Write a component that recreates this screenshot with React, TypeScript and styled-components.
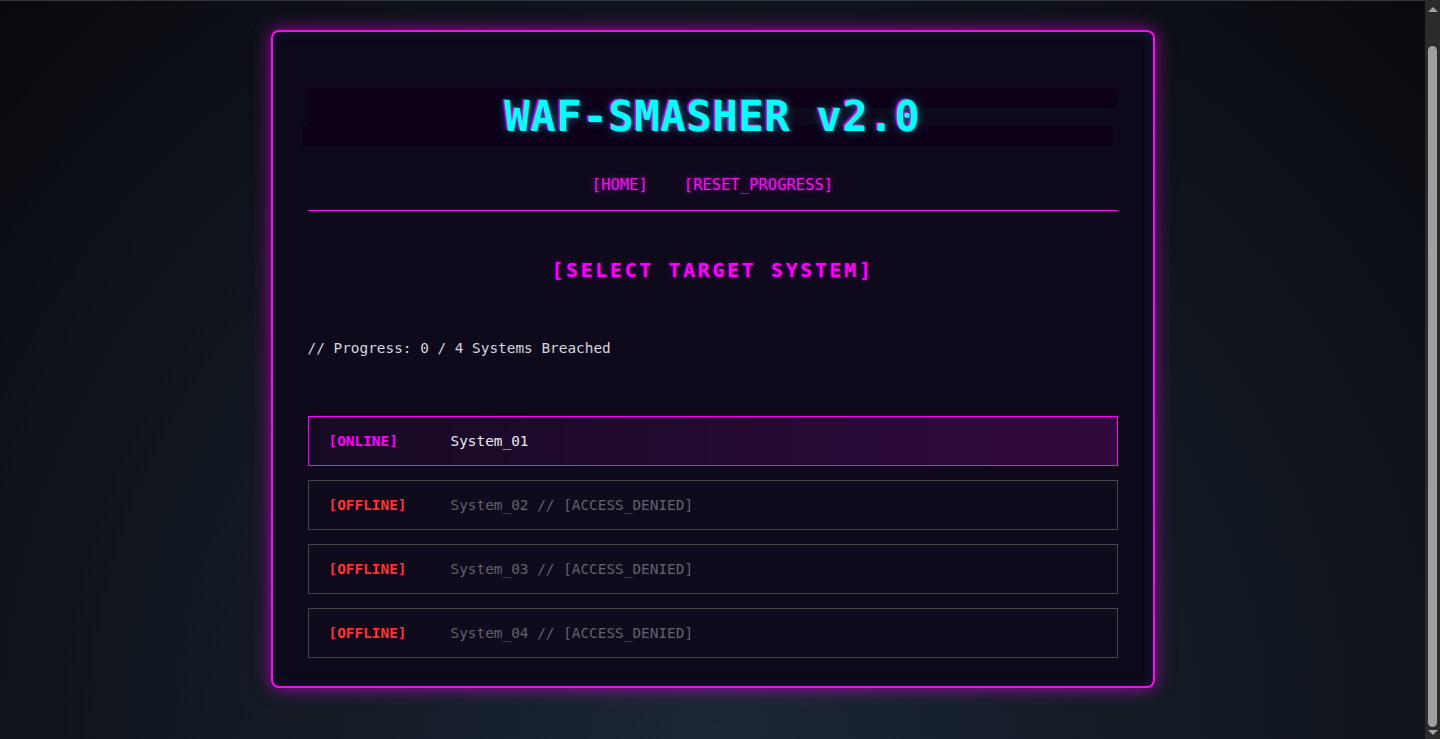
import React from "react";
import styled, { createGlobalStyle } from "styled-components";

const GlobalStyle = createGlobalStyle`
  html, body {
    margin: 0;
    padding: 0;
  }
  body {
    background: radial-gradient(ellipse at bottom, #1b2735 0%, #090a0f 100%);
    background-attachment: fixed;
    min-height: 100vh;
    overflow: hidden;
    font-family: "DejaVu Sans Mono", "Liberation Mono", monospace;
    color: #e0e0e0;
  }
`;

const Page = styled.div`
  box-sizing: border-box;
  width: calc(100% - 15px);
  min-height: 100vh;
  padding-top: 29px;
  border-top: 1px solid #33363c;
`;

const Terminal = styled.main`
  box-sizing: border-box;
  width: 884px;
  margin: 0 auto;
  padding: 35px 35px 28px;
  border: 2px solid #f010f0;
  border-radius: 8px;
  background: #0e0a1c;
  box-shadow: 0 0 18px rgba(255, 0, 255, 0.6), inset 0 0 12px rgba(40, 60, 120, 0.25);
`;

const Header = styled.header`
  padding-bottom: 16px;
  border-bottom: 1px solid #ff00ff;
`;

const TitleWrap = styled.div`
  position: relative;
  margin-top: 25px;
  margin-bottom: 34px;
`;

const Band = styled.div<{ $top: number; $left: number; $width: number; $height: number }>`
  position: absolute;
  top: ${(p) => p.$top}px;
  left: ${(p) => p.$left}px;
  width: ${(p) => p.$width}px;
  height: ${(p) => p.$height}px;
  background: #0d0019;
`;

const Title = styled.h1`
  position: relative;
  margin: 0;
  text-align: center;
  font-size: 42px;
  line-height: 50px;
  font-weight: bold;
  letter-spacing: 0.7px;
  color: #00ffff;
  text-shadow: -2px -1px 0 rgba(255, 0, 255, 0.75), 2px 1px 0 rgba(0, 70, 110, 0.8),
    0 0 8px rgba(0, 255, 255, 0.45);
`;

const Nav = styled.nav`
  display: flex;
  justify-content: center;
  gap: 36px;
`;

const NavLink = styled.a`
  font-size: 15.5px;
  line-height: 18px;
  color: #e818e8;
  text-decoration: none;
  text-shadow: 0 0 5px rgba(255, 0, 255, 0.6);
  cursor: pointer;
`;

const SectionTitle = styled.h2`
  margin: 48px 0 0;
  text-align: center;
  font-size: 20px;
  line-height: 22px;
  font-weight: bold;
  letter-spacing: 2.6px;
  color: #ff00ff;
  text-shadow: 0 0 4px rgba(255, 0, 255, 0.35);
`;

const Progress = styled.p`
  margin: 59px 0 0;
  font-size: 14.4px;
  line-height: 17px;
  color: #d6d6de;
`;

const List = styled.ul`
  list-style: none;
  margin: 59px 0 0;
  padding: 0;
  display: flex;
  flex-direction: column;
  gap: 14px;
`;

const Row = styled.li<{ $online: boolean }>`
  display: flex;
  align-items: center;
  padding: 15px 20px;
  font-size: 14.4px;
  line-height: 18px;
  border: 1px solid ${(p) => (p.$online ? "#ff00ff" : "#444448")};
  background: ${(p) =>
    p.$online
      ? "linear-gradient(90deg, rgba(255,0,255,0.03) 0%, rgba(255,0,255,0.15) 100%)"
      : "rgba(255,255,255,0.008)"};
  cursor: ${(p) => (p.$online ? "pointer" : "not-allowed")};
`;

const Status = styled.span<{ $online: boolean }>`
  width: 122px;
  flex-shrink: 0;
  font-weight: bold;
  color: ${(p) => (p.$online ? "#ff00ff" : "#ff3333")};
`;

const Name = styled.span<{ $online: boolean }>`
  color: ${(p) => (p.$online ? "#ececf0" : "#626268")};
`;

/* Window scrollbar drawn over the right edge, as in the screenshot */
const ScrollTrack = styled.div`
  position: fixed;
  top: 0;
  right: 0;
  width: 15px;
  height: 100vh;
  background: #2b2b2b;
  display: flex;
  flex-direction: column;
  align-items: center;
  justify-content: space-between;
`;

const Arrow = styled.div<{ $down?: boolean }>`
  width: 0;
  height: 0;
  margin: ${(p) => (p.$down ? "0 0 4px" : "7px 0 0")};
  border-left: 5px solid transparent;
  border-right: 5px solid transparent;
  ${(p) =>
    p.$down ? "border-top: 5px solid #a3a3a3;" : "border-bottom: 5px solid #a3a3a3;"}
`;

const Thumb = styled.div`
  position: absolute;
  top: 46px;
  bottom: 12px;
  left: 3px;
  width: 9px;
  border-radius: 5px;
  background: #9f9f9f;
`;

const systems = [
  { id: "01", online: true },
  { id: "02", online: false },
  { id: "03", online: false },
  { id: "04", online: false },
];

export default function App() {
  return (
    <>
      <GlobalStyle />
      <Page>
        <Terminal>
          <Header>
            <TitleWrap>
              <Band $top={-4} $left={-1} $width={810} $height={20} />
              <Band $top={16} $left={-1} $width={480} $height={17} />
              <Band $top={33} $left={-6} $width={811} $height={21} />
              <Title>WAF-SMASHER v2.0</Title>
            </TitleWrap>
            <Nav>
              <NavLink>[HOME]</NavLink>
              <NavLink>[RESET_PROGRESS]</NavLink>
            </Nav>
          </Header>
          <SectionTitle>[SELECT TARGET SYSTEM]</SectionTitle>
          <Progress>// Progress: 0 / 4 Systems Breached</Progress>
          <List>
            {systems.map((s) => (
              <Row key={s.id} $online={s.online}>
                <Status $online={s.online}>{s.online ? "[ONLINE]" : "[OFFLINE]"}</Status>
                <Name $online={s.online}>
                  {s.online ? `System_${s.id}` : `System_${s.id} // [ACCESS_DENIED]`}
                </Name>
              </Row>
            ))}
          </List>
        </Terminal>
      </Page>
      <ScrollTrack>
        <Arrow />
        <Thumb />
        <Arrow $down />
      </ScrollTrack>
    </>
  );
}
